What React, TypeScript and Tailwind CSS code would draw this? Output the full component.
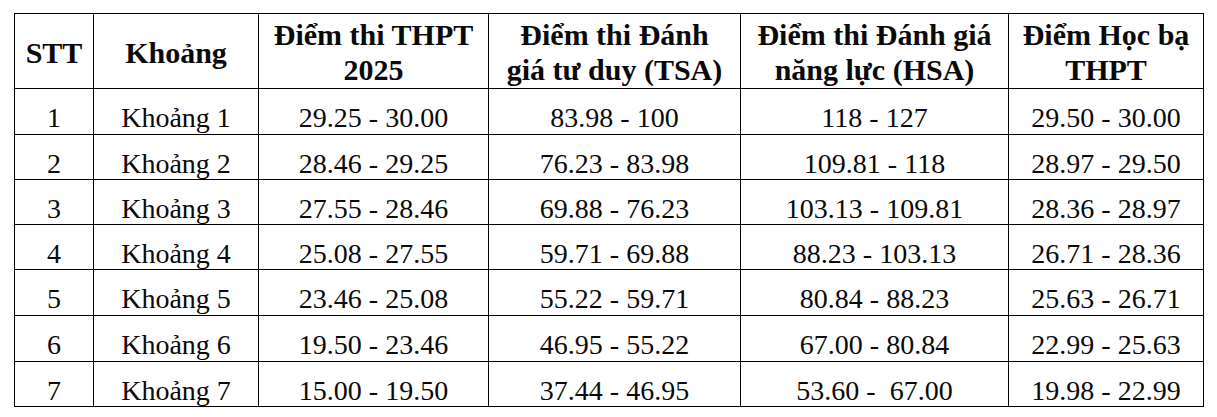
import React from 'react';

type Row = {
  stt: string;
  khoang: string;
  thpt: string;
  tsa: string;
  hsa: string;
  hocba: string;
  h: string;
};

const rows: Row[] = [
  { stt: '1', khoang: 'Khoảng 1', thpt: '29.25 - 30.00', tsa: '83.98 - 100', hsa: '118 - 127', hocba: '29.50 - 30.00', h: 'h-[46px]' },
  { stt: '2', khoang: 'Khoảng 2', thpt: '28.46 - 29.25', tsa: '76.23 - 83.98', hsa: '109.81 - 118', hocba: '28.97 - 29.50', h: 'h-[45px]' },
  { stt: '3', khoang: 'Khoảng 3', thpt: '27.55 - 28.46', tsa: '69.88 - 76.23', hsa: '103.13 - 109.81', hocba: '28.36 - 28.97', h: 'h-[45px]' },
  { stt: '4', khoang: 'Khoảng 4', thpt: '25.08 - 27.55', tsa: '59.71 - 69.88', hsa: '88.23 - 103.13', hocba: '26.71 - 28.36', h: 'h-[45px]' },
  { stt: '5', khoang: 'Khoảng 5', thpt: '23.46 - 25.08', tsa: '55.22 - 59.71', hsa: '80.84 - 88.23', hocba: '25.63 - 26.71', h: 'h-[46px]' },
  { stt: '6', khoang: 'Khoảng 6', thpt: '19.50 - 23.46', tsa: '46.95 - 55.22', hsa: '67.00 - 80.84', hocba: '22.99 - 25.63', h: 'h-[46px]' },
  { stt: '7', khoang: 'Khoảng 7', thpt: '15.00 - 19.50', tsa: '37.44 - 46.95', hsa: '53.60 -  67.00', hocba: '19.98 - 22.99', h: 'h-[45px]' },
];

const headers: React.ReactNode[] = [
  'STT',
  'Khoảng',
  <>Điểm thi THPT<br />2025</>,
  <>Điểm thi Đánh<br />giá tư duy (TSA)</>,
  <>Điểm thi Đánh giá<br />năng lực (HSA)</>,
  <>Điểm Học bạ<br />THPT</>,
];

const HeadCell = ({ children }: { children: React.ReactNode }) => (
  <div className="h-[75px] border-r border-b border-black flex items-center justify-center text-center font-bold text-[30px] leading-[35px] pt-[2px]">
    <div>{children}</div>
  </div>
);

const BodyCell = ({ children, h }: { children: React.ReactNode; h: string }) => (
  <div className={`${h} border-r border-b border-black text-center text-[28px] leading-[31px] pt-[13px] whitespace-pre`}>
    {children}
  </div>
);

export default function App() {
  return (
    <div className="w-[1217px] h-[417px] bg-white pt-[13px] pl-[14px] text-[#0a0a0a] [font-family:'Liberation_Serif','Times_New_Roman',serif] overflow-hidden">
      <div className="grid grid-cols-[79px_165px_230px_252px_268px_195px] w-fit border-l border-t border-black">
        {headers.map((hd, i) => (
          <HeadCell key={i}>{hd}</HeadCell>
        ))}
        {rows.map((r) => (
          <React.Fragment key={r.stt}>
            <BodyCell h={r.h}>{r.stt}</BodyCell>
            <BodyCell h={r.h}>{r.khoang}</BodyCell>
            <BodyCell h={r.h}>{r.thpt}</BodyCell>
            <BodyCell h={r.h}>{r.tsa}</BodyCell>
            <BodyCell h={r.h}>{r.hsa}</BodyCell>
            <BodyCell h={r.h}>{r.hocba}</BodyCell>
          </React.Fragment>
        ))}
      </div>
    </div>
  );
}
